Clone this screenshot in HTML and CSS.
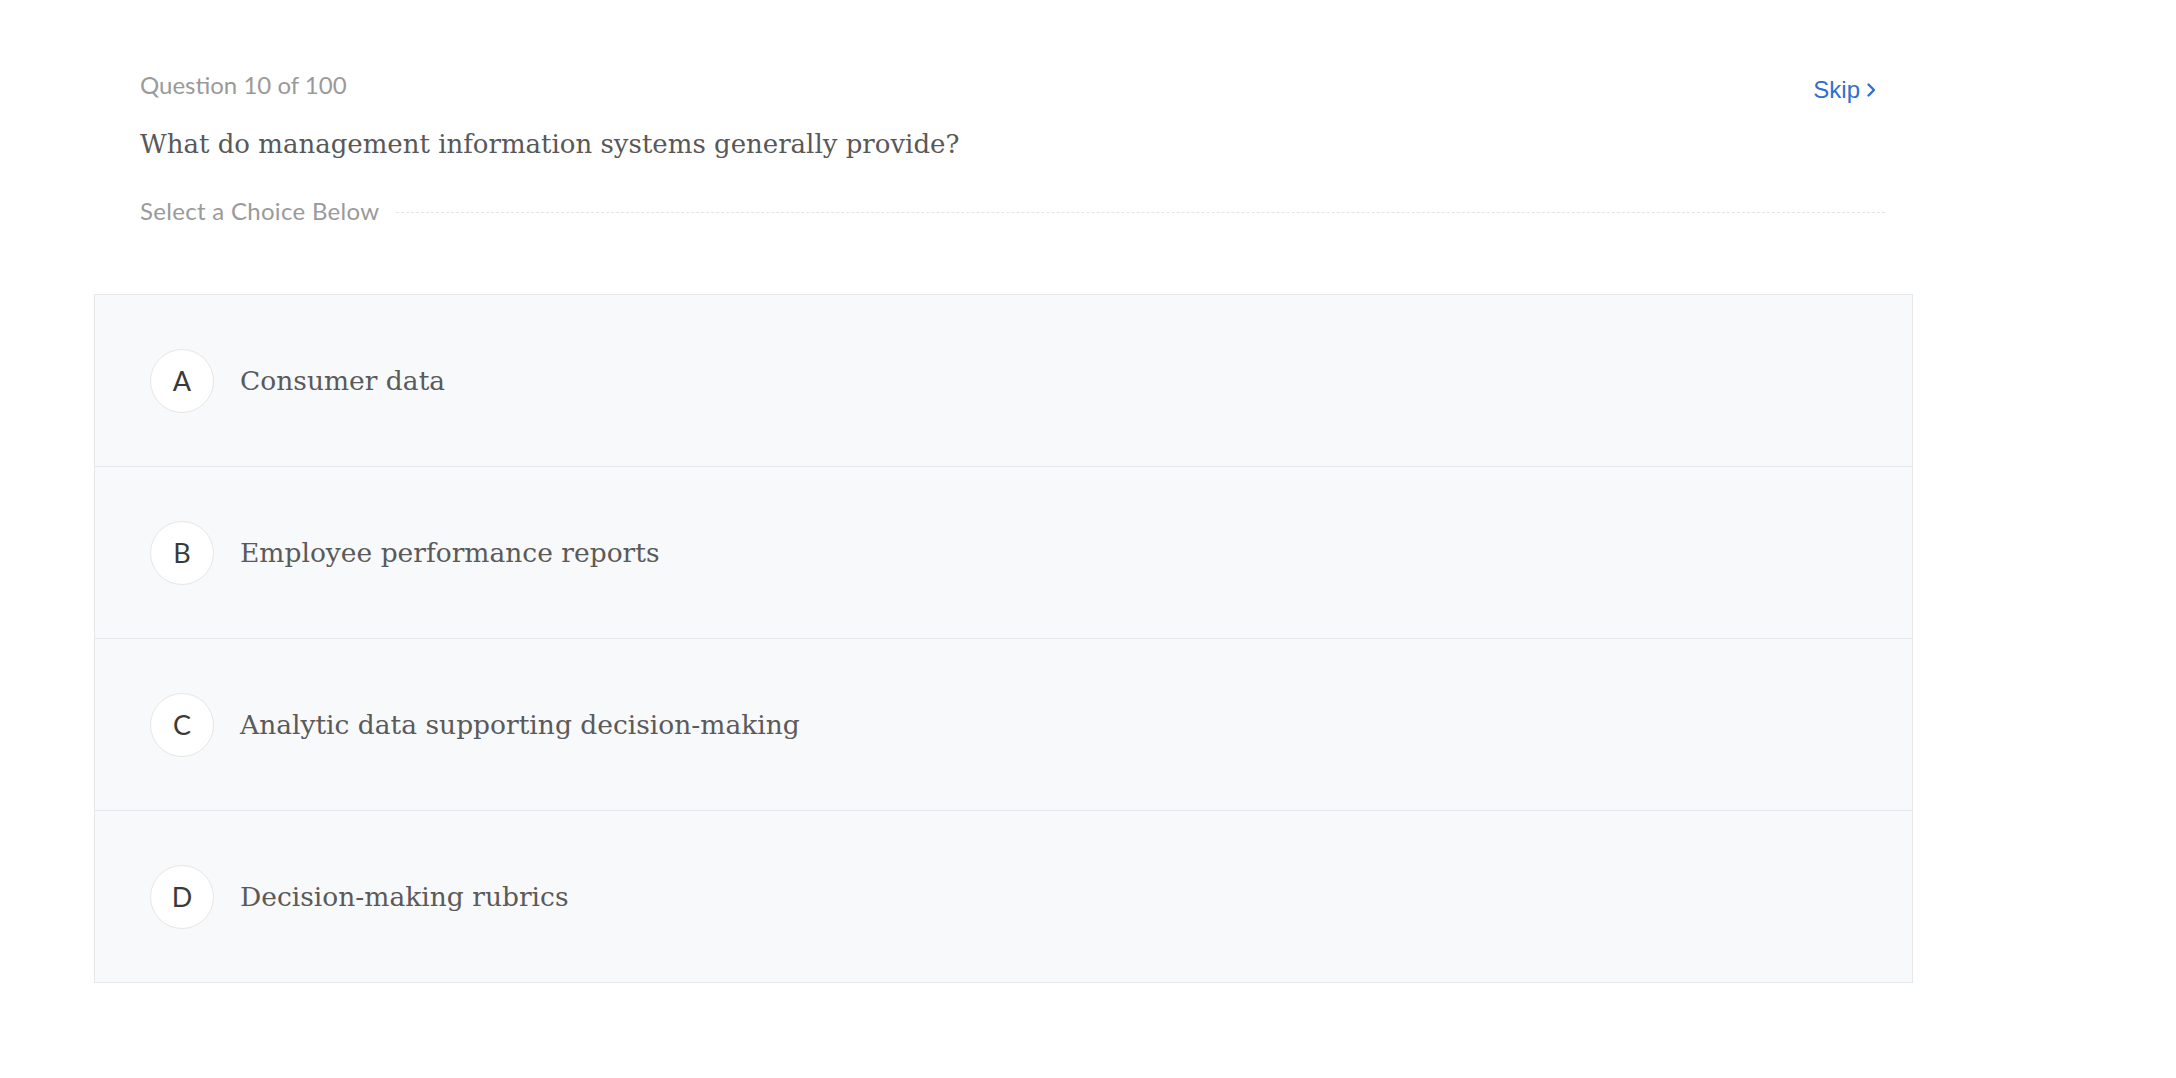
FILE: index.html
```html
<!DOCTYPE html>
<html lang="en">
<head>
<meta charset="utf-8">
<title>Question 10 of 100</title>
<link rel="stylesheet" href="styles.css">
</head>
<body>
<main class="page">
  <header class="header">
    <div class="top-row">
      <div class="meta">
        <div class="counter">Question 10 of 100</div>
        <h1 class="question">What do management information systems generally provide?</h1>
      </div>
      <a class="skip" href="#">Skip<svg class="chev" width="11" height="16" viewBox="0 0 11 16"><path d="M2.5 2.5 L8 8 L2.5 13.5" fill="none" stroke="currentColor" stroke-width="2.4" stroke-linecap="round" stroke-linejoin="round"/></svg></a>
    </div>
    <div class="select-row">
      <span class="select-label">Select a Choice Below</span>
      <span class="rule"></span>
    </div>
  </header>
  <ul class="choices">
    <li class="choice"><span class="letter">A</span><span class="answer">Consumer data</span></li>
    <li class="choice"><span class="letter">B</span><span class="answer">Employee performance reports</span></li>
    <li class="choice"><span class="letter">C</span><span class="answer">Analytic data supporting decision-making</span></li>
    <li class="choice"><span class="letter">D</span><span class="answer">Decision-making rubrics</span></li>
  </ul>
</main>
</body>
</html>
```
FILE: styles.css
```css
html, body {
  margin: 0;
  padding: 0;
  background: #ffffff;
}
body {
  font-family: Lato, "Open Sans", sans-serif;
  color: #555;
}
.page {
  width: 1819px;
  margin-left: 94px;
}
.header {
  padding: 72px 28px 0 46px;
}
.top-row {
  display: flex;
  justify-content: space-between;
  align-items: flex-start;
}
.counter {
  font-size: 24px;
  line-height: 26px;
  color: #9a9a9a;
}
.question {
  margin: 26px 0 0 0;
  font-family: "DejaVu Serif", serif;
  font-weight: normal;
  font-size: 26px;
  line-height: 40px;
  color: #585858;
}
.skip {
  margin-top: 5px;
  margin-right: 8px;
  display: flex;
  align-items: center;
  gap: 6px;
  font-family: "Liberation Sans", Arial, sans-serif;
  font-size: 24px;
  line-height: 26px;
  color: #2f6fd0;
  text-decoration: none;
}
.chev {
  display: block;
}
.select-row {
  margin-top: 34px;
  display: flex;
  align-items: center;
  gap: 17px;
}
.select-label {
  font-size: 24px;
  letter-spacing: 0.3px;
  line-height: 26px;
  color: #9a9a9a;
  white-space: nowrap;
}
.rule {
  flex: 1;
  border-top: 1px dashed #e2e4e6;
  margin-top: 2px;
}
.choices {
  list-style: none;
  margin: 70px 0 0 0;
  padding: 0;
  border: 1px solid #e4e8ea;
  background: #f8f9fb;
}
.choice {
  height: 171px;
  display: flex;
  align-items: center;
  padding-left: 55px;
  gap: 26px;
}
.choice + .choice {
  border-top: 1px solid #e4e8ea;
}
.letter {
  width: 62px;
  height: 62px;
  border: 1px solid #e6e6e6;
  border-radius: 50%;
  background: #fff;
  display: flex;
  align-items: center;
  justify-content: center;
  font-family: Lato, sans-serif;
  font-size: 27px;
  color: #3a3a3a;
}
.answer {
  font-family: "DejaVu Serif", serif;
  font-size: 26.5px;
  color: #5a5a5a;
}
```
